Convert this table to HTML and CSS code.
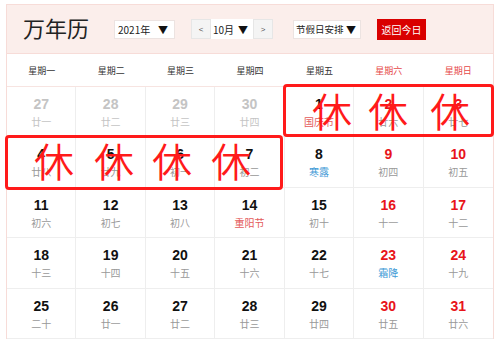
FILE: index.html
```html
<!DOCTYPE html>
<html lang="zh">
<head>
<meta charset="utf-8">
<link rel="stylesheet" href="styles.css">
</head>
<body>
<div class="cal">
  <div class="head">
    <div class="title">万年历</div>
    <div class="sel year"><span>2021年</span><span class="arr">▼</span></div>
    <div class="nav">
      <div class="btn">&lt;</div>
      <div class="sel month"><span>10月</span><span class="arr">▼</span></div>
      <div class="btn">&gt;</div>
    </div>
    <div class="sel hol"><span>节假日安排</span><span class="arr">▼</span></div>
    <div class="today">返回今日</div>
  </div>
  <div class="week">
    <div>星期一</div><div>星期二</div><div>星期三</div><div>星期四</div><div>星期五</div><div class="we">星期六</div><div class="we">星期日</div>
  </div>
  <div class="grid">
    <div class="cell other"><b>27</b><i>廿一</i></div>
    <div class="cell other"><b>28</b><i>廿二</i></div>
    <div class="cell other"><b>29</b><i>廿三</i></div>
    <div class="cell other"><b>30</b><i>廿四</i></div>
    <div class="cell"><b>1</b><i class="fest">国庆节</i></div>
    <div class="cell red"><b>2</b><i>廿六</i></div>
    <div class="cell red"><b>3</b><i>廿七</i></div>

    <div class="cell"><b>4</b><i>廿八</i></div>
    <div class="cell"><b>5</b><i>廿九</i></div>
    <div class="cell"><b>6</b><i>初一</i></div>
    <div class="cell"><b>7</b><i>初二</i></div>
    <div class="cell"><b>8</b><i class="term">寒露</i></div>
    <div class="cell red"><b>9</b><i>初四</i></div>
    <div class="cell red"><b>10</b><i>初五</i></div>

    <div class="cell"><b>11</b><i>初六</i></div>
    <div class="cell"><b>12</b><i>初七</i></div>
    <div class="cell"><b>13</b><i>初八</i></div>
    <div class="cell"><b>14</b><i class="fest">重阳节</i></div>
    <div class="cell"><b>15</b><i>初十</i></div>
    <div class="cell red"><b>16</b><i>十一</i></div>
    <div class="cell red"><b>17</b><i>十二</i></div>

    <div class="cell"><b>18</b><i>十三</i></div>
    <div class="cell"><b>19</b><i>十四</i></div>
    <div class="cell"><b>20</b><i>十五</i></div>
    <div class="cell"><b>21</b><i>十六</i></div>
    <div class="cell"><b>22</b><i>十七</i></div>
    <div class="cell red"><b>23</b><i class="term">霜降</i></div>
    <div class="cell red"><b>24</b><i>十九</i></div>

    <div class="cell"><b>25</b><i>二十</i></div>
    <div class="cell"><b>26</b><i>廿一</i></div>
    <div class="cell"><b>27</b><i>廿二</i></div>
    <div class="cell"><b>28</b><i>廿三</i></div>
    <div class="cell"><b>29</b><i>廿四</i></div>
    <div class="cell red"><b>30</b><i>廿五</i></div>
    <div class="cell red"><b>31</b><i>廿六</i></div>
  </div>
</div>

<div class="box box1"></div>
<div class="box box2"></div>
<span class="xiu" style="left:312px;top:90px">休</span>
<span class="xiu" style="left:368px;top:90px">休</span>
<span class="xiu" style="left:430px;top:90px">休</span>
<span class="xiu" style="left:34px;top:140px">休</span>
<span class="xiu" style="left:94px;top:140px">休</span>
<span class="xiu" style="left:152px;top:140px">休</span>
<span class="xiu" style="left:211px;top:140px">休</span>
</body>
</html>
```
FILE: styles.css
```css
html, body {
  margin: 0;
  padding: 0;
  background: #fff;
  overflow: hidden;
}
body {
  position: relative;
  width: 500px;
  height: 344px;
  font-family: "Liberation Sans", "Noto Sans CJK SC", sans-serif;
  color: #333;
}
.cal {
  margin: 4px 0 0 6px;
  width: 488px;
  box-sizing: border-box;
  border: 1px solid #f7dcd8;
  border-bottom: none;
}
.head {
  height: 48px;
  background: #fbeeeb;
  border-bottom: 1px solid #f7dcd8;
  display: flex;
  align-items: center;
  padding-left: 16px;
  box-sizing: content-box;
}
.title {
  font-family: "Noto Sans CJK SC", sans-serif;
  font-size: 22px;
  color: #222;
  width: 91px;
  line-height: 30px;
  margin-top: -4px;
}
.sel {
  height: 19px;
  background: #fff;
  border: 1px solid #ece3e1;
  box-sizing: border-box;
  display: flex;
  align-items: center;
  justify-content: space-between;
  padding: 0 6px 0 3px;
  font-family: "Noto Sans CJK SC", sans-serif;
  font-size: 10px;
  color: #222;
  white-space: nowrap;
}
.sel .arr {
  font-size: 10px;
  color: #111;
}
.year { width: 61px; }
.nav {
  display: flex;
  margin-left: 16px;
}
.btn {
  width: 20px;
  height: 20px;
  box-sizing: border-box;
  background: #f4f4f4;
  border: 1px solid #e6e6e6;
  font-size: 8px;
  color: #555;
  display: flex;
  align-items: center;
  justify-content: center;
}
.month {
  width: 42px;
  height: 20px;
  border: none;
  padding: 0 5px 0 2px;
}
.hol {
  width: 68px;
  margin-left: 20px;
  padding: 0 4px 0 2px;
  font-size: 9.5px;
}
.today {
  margin-left: 16px;
  width: 49px;
  height: 21px;
  background: #d90000;
  color: #fff;
  font-family: "Noto Sans CJK SC", sans-serif;
  font-size: 10px;
  display: flex;
  align-items: center;
  justify-content: center;
}
.week {
  display: grid;
  grid-template-columns: repeat(7, 1fr);
  height: 32px;
  align-items: center;
  border-bottom: 1px solid #f7e4e1;
  font-family: "Noto Sans CJK SC", sans-serif;
  font-size: 9px;
  color: #333;
  text-align: center;
}
.week .we { color: #e64848; }
.grid {
  display: grid;
  grid-template-columns: repeat(7, 1fr);
  grid-auto-rows: 50.4px;
}
.cell {
  box-sizing: border-box;
  border-right: 1px solid #eeeeee;
  border-bottom: 1px solid #eeeeee;
  display: flex;
  flex-direction: column;
  align-items: center;
  padding-top: 8px;
}
.cell:nth-child(7n) { border-right: none; }
.cell b {
  font-size: 14px;
  line-height: 18px;
  font-weight: bold;
  color: #111;
}
.cell i {
  font-style: normal;
  font-family: "Noto Sans CJK SC", sans-serif;
  font-size: 10px;
  line-height: 14px;
  margin-top: 2px;
  color: #999;
}
.cell.red b { color: #e8141a; }
.cell.other b, .cell.other i { color: #c4c4c4; }
.cell i.fest { color: #e45a5a; }
.cell i.term { color: #3f9ad6; }

.box {
  position: absolute;
  border: 3px solid #ff1a1a;
  border-radius: 4px;
  box-sizing: border-box;
}
.box1 { left: 283px; top: 84px; width: 211px; height: 53px; }
.box2 { left: 5px; top: 135px; width: 278px; height: 55px; }
.xiu {
  position: absolute;
  width: 40px;
  height: 40px;
  line-height: 40px;
  text-align: center;
  font-family: "Noto Sans CJK SC", sans-serif;
  font-weight: 350;
  font-size: 40px;
  color: #ff1a1a;
}
```
